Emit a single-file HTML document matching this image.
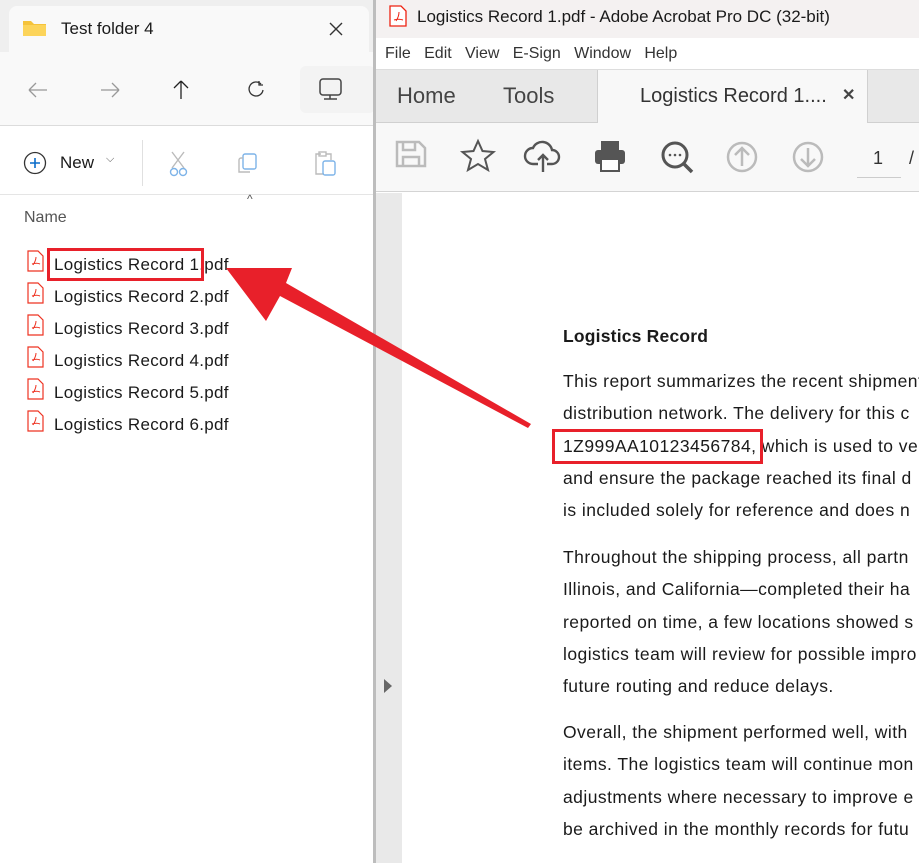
<!DOCTYPE html>
<html><head><meta charset="utf-8"><style>
*{margin:0;padding:0;box-sizing:border-box}
body{width:919px;height:863px;overflow:hidden;position:relative;background:#fff;font-family:"Liberation Sans",sans-serif;}
.a{position:absolute}
.doc{font-size:17.5px;letter-spacing:0.45px;color:#1a1a1a;line-height:32.3px;white-space:nowrap}
.f{font-size:17px;letter-spacing:0.3px;color:#1a1a1a}
</style></head><body>
<!-- Explorer -->
<div class="a" style="left:0;top:0;width:375px;height:126px;background:#efefef"></div>
<div class="a" style="left:9px;top:6px;width:360px;height:52px;background:#f9f9f9;border-radius:8px 8px 0 0"></div>
<div class="a" style="left:0;top:52px;width:375px;height:74px;background:#f9f9f9;border-bottom:1px solid #dcdcdc"></div>
<svg class="a" style="left:22px;top:19px" width="25" height="18"><path d="M1 2h8l3 3h12v12H1z" fill="#f5c33b"/><path d="M1 6h23v11H1z" fill="#fcd45a"/></svg>
<div class="a" style="left:61px;top:19px;font-size:17px;color:#1a1a1a">Test folder 4</div>
<svg class="a" style="left:329px;top:22px" width="14" height="14"><path d="M1 1l12 12M13 1L1 13" stroke="#333" stroke-width="1.4"/></svg>
<svg class="a" style="left:26px;top:78px" width="260" height="24" fill="none" stroke-width="1.3">
<path d="M3 12h18M3 12l7-7M3 12l7 7" stroke="#999"/>
<path d="M75 12h18M93 12l-7-7M93 12l-7 7" stroke="#999"/>
<path d="M155 3v18M155 3l-7 7M155 3l7 7" stroke="#222"/>
<path d="M235 6a7 7 0 1 0 2 6M233 3v4h4" stroke="#333"/>
</svg>
<div class="a" style="left:300px;top:66px;width:75px;height:47px;background:#f3f3f3;border-radius:6px"></div>
<svg class="a" style="left:318px;top:77px" width="26" height="26" fill="none" stroke="#444" stroke-width="1.5"><rect x="2" y="2" width="21" height="16" rx="3"/><path d="M12 18v4M6 22h13"/></svg>
<div class="a" style="left:0;top:127px;width:375px;height:68px;background:#fff;border-bottom:1px solid #e5e5e5"></div>
<svg class="a" style="left:23px;top:151px" width="24" height="24"><circle cx="12" cy="12" r="10.5" fill="none" stroke="#333" stroke-width="1.3"/><path d="M12 7v10M7 12h10" stroke="#0a6cc9" stroke-width="1.6"/></svg>
<div class="a" style="left:60px;top:153px;font-size:17px;color:#1a1a1a">New</div>
<div class="a" style="left:106px;top:153px;font-size:11px;color:#555">⌵</div>
<div class="a" style="left:142px;top:140px;width:1px;height:46px;background:#e0e0e0"></div>
<svg class="a" style="left:168px;top:150px" width="180" height="28" fill="none" stroke-width="1.4">
<path d="M4 2l12 16M16 2L4 18" stroke="#bbb"/><circle cx="6" cy="22" r="3.5" stroke="#7db3e8"/><circle cx="15" cy="22" r="3.5" stroke="#7db3e8"/>
<rect x="75" y="4" width="13" height="15" rx="2" stroke="#7db3e8"/><path d="M75 8h-2a2 2 0 0 0-2 2v12h11" stroke="#bbb"/>
<path d="M153 4h-5v20h8M158 4h5v6" stroke="#bbb"/><rect x="151" y="2" width="7" height="4" stroke="#bbb"/><rect x="155" y="11" width="12" height="14" rx="2" stroke="#7db3e8"/>
</svg>
<div class="a" style="left:247px;top:192px;font-size:12px;color:#555">^</div>
<div class="a" style="left:24px;top:209px;font-size:16px;color:#555">Name</div>
<div class="a" style="left:26px;top:250px">
<div style="position:relative;height:192px">
<svg class="a" style="left:0;top:0" width="20" height="190">
<defs><g id="p"><path d="M2 1h10l5 5v15H2z" fill="#fff" stroke="#e32" stroke-width="1.2"/><path d="M7 15c2-3 3-6 3-8M6 14c3-1 6-1 8 0" stroke="#e32" fill="none" stroke-width="1"/></g></defs>
<use href="#p" y="0"/><use href="#p" y="32"/><use href="#p" y="64"/><use href="#p" y="96"/><use href="#p" y="128"/><use href="#p" y="160"/></svg>
<div class="a f" style="left:28px;line-height:32px;white-space:nowrap;top:-1px">Logistics Record 1.pdf<br>Logistics Record 2.pdf<br>Logistics Record 3.pdf<br>Logistics Record 4.pdf<br>Logistics Record 5.pdf<br>Logistics Record 6.pdf</div>
</div></div>
<!-- Acrobat -->
<div class="a" style="left:373px;top:0;width:3px;height:863px;background:#bdbdbd"></div>
<div class="a" style="left:376px;top:0;width:543px;height:38px;background:#f4f1f1"></div>
<svg class="a" style="left:388px;top:5px" width="20" height="22"><path d="M2 1h11l5 5v15H2z" fill="#fff" stroke="#e21" stroke-width="1.3"/><path d="M8 16c2-3 3-6 3-9M6 15c3-1 6-1 9 0" stroke="#e21" fill="none"/></svg>
<div class="a" style="left:417px;top:7px;font-size:17px;color:#1a1a1a">Logistics Record 1.pdf - Adobe Acrobat Pro DC (32-bit)</div>
<div class="a" style="left:376px;top:38px;width:543px;height:32px;background:#fff;border-bottom:1px solid #ddd"></div>
<div class="a" style="left:385px;top:45px;font-size:16px;color:#333">File&nbsp;&nbsp;&nbsp;Edit&nbsp;&nbsp;&nbsp;View&nbsp;&nbsp;&nbsp;E-Sign&nbsp;&nbsp;&nbsp;Window&nbsp;&nbsp;&nbsp;Help</div>
<div class="a" style="left:376px;top:70px;width:543px;height:53px;background:#e8e8e8;border-bottom:1px solid #d0d0d0"></div>
<div class="a" style="left:597px;top:70px;width:271px;height:53px;background:#f8f8f8;border-left:1px solid #d0d0d0;border-right:1px solid #d0d0d0"></div>
<div class="a" style="left:397px;top:83px;font-size:22px;color:#444">Home</div>
<div class="a" style="left:503px;top:83px;font-size:22px;color:#444">Tools</div>
<div class="a" style="left:640px;top:85px;font-size:20px;color:#333">Logistics Record 1....</div>
<div class="a" style="left:842px;top:85px;font-size:16px;color:#444;font-weight:bold">✕</div>
<div class="a" style="left:376px;top:123px;width:543px;height:69px;background:#f8f8f8;border-bottom:1px solid #d4d4d4"></div>
<svg class="a" style="left:395px;top:138px" width="440" height="40" fill="none">
<path d="M2 4h22l6 6v18H2z" stroke="#bbb" stroke-width="2.5"/><path d="M8 4v8h12V4M8 28v-9h16v9" stroke="#bbb" stroke-width="2.5"/>
<path d="M83 3l4.5 10 11 1-8.5 7 3 11-10-6-10 6 3-11-8.5-7 11-1z" stroke="#555" stroke-width="2"/>
<path d="M143 26h-5a8 8 0 0 1 0-16a10 10 0 0 1 19 2a7 7 0 0 1 0 14h-5M148 34V17M143 22l5-5 5 5" stroke="#555" stroke-width="2.4"/>
<rect x="200" y="12" width="30" height="14" rx="3" fill="#555"/><rect x="206" y="3" width="18" height="9" fill="#555"/><rect x="206" y="21" width="18" height="12" fill="#fff" stroke="#555" stroke-width="2"/>
<circle cx="280" cy="17" r="12" stroke="#555" stroke-width="3"/><path d="M289 26l8 8" stroke="#555" stroke-width="3.5"/><circle cx="275" cy="17" r="1.3" fill="#555"/><circle cx="280" cy="17" r="1.3" fill="#555"/><circle cx="285" cy="17" r="1.3" fill="#555"/>
<circle cx="347" cy="19" r="14" stroke="#bbb" stroke-width="2.5"/><path d="M347 28V10M340 17l7-7 7 7" stroke="#bbb" stroke-width="2.5"/>
<circle cx="413" cy="19" r="14" stroke="#bbb" stroke-width="2.5"/><path d="M413 10v18M406 21l7 7 7-7" stroke="#bbb" stroke-width="2.5"/>
</svg>
<div class="a" style="left:873px;top:148px;font-size:18px;color:#333">1</div>
<div class="a" style="left:857px;top:177px;width:44px;height:1px;background:#ccc"></div>
<div class="a" style="left:909px;top:148px;font-size:18px;color:#333">/</div>
<div class="a" style="left:376px;top:193px;width:26px;height:670px;background:#e9e9e9"></div>
<svg class="a" style="left:383px;top:678px" width="10" height="16"><path d="M1 1l8 7-8 7z" fill="#666"/></svg>
<div class="a doc" style="left:563px;top:320px;font-weight:bold;letter-spacing:0.2px">Logistics Record</div>
<div class="a doc" style="left:563px;top:365px">This report summarizes the recent shipment<br>distribution network. The delivery for this c<br>1Z999AA10123456784, which is used to ve<br>and ensure the package reached its final d<br>is included solely for reference and does n</div>
<div class="a doc" style="left:563px;top:541px">Throughout the shipping process, all partn<br>Illinois, and California—completed their ha<br>reported on time, a few locations showed s<br>logistics team will review for possible impro<br>future routing and reduce delays.</div>
<div class="a doc" style="left:563px;top:716px">Overall, the shipment performed well, with<br>items. The logistics team will continue mon<br>adjustments where necessary to improve e<br>be archived in the monthly records for futu</div>
<!-- annotations -->
<div class="a" style="left:47px;top:248px;width:157px;height:33px;border:3px solid #e8202a"></div>
<div class="a" style="left:552px;top:429px;width:211px;height:35px;border:3px solid #e8202a"></div>
<svg class="a" style="left:0;top:0" width="919" height="863"><polygon points="226,268 292,268 286,283 531,424 528,428 280,296 266,321" fill="#e8202a"/></svg>
</body></html>
